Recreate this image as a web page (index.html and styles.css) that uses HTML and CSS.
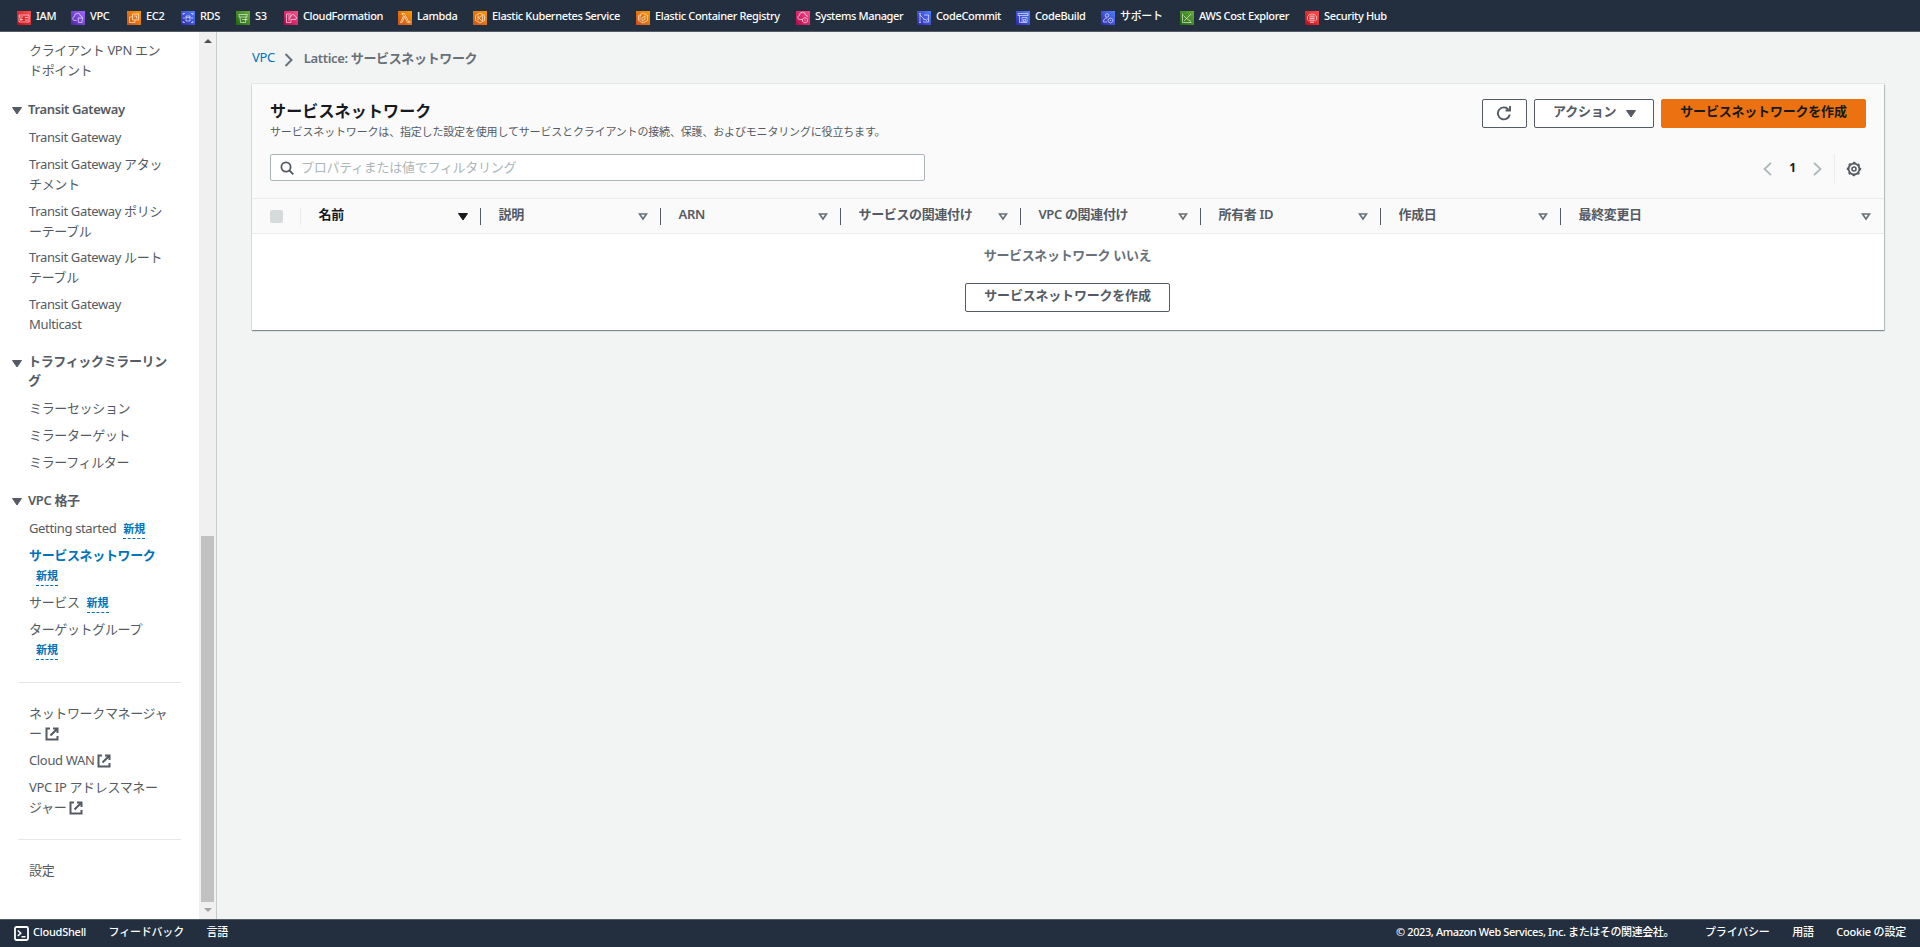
FILE: index.html
```html
<!DOCTYPE html>
<html lang="ja">
  <head>
    <meta charset="UTF-8" />
    <meta name="viewport" content="width=device-width, initial-scale=1.0" />
    <title>サービスネットワーク | VPC</title>
    <link rel="stylesheet" href="styles.css">
  </head>
  <body>
    <svg class="defs" width="0" height="0">
      <defs>
        <symbol id="external" viewBox="0 0 14 14">
          <path d="M5 1.500H1.500v11h11V9M8 1.500h4.500V6M12.500 1.500L5.500 8.500" fill="none" stroke="#545b64" stroke-width="2" />
        </symbol>
        <symbol id="sort" viewBox="0 0 10 8">
          <path d="M1.500 1h7L5 6z" fill="none" stroke="#687078" stroke-width="1.700" />
        </symbol>
        <symbol id="caret" viewBox="0 0 10 8">
          <path d="M.5.500h9L5 7z" fill="currentColor" stroke="currentColor" stroke-linejoin="round" />
        </symbol>
      </defs>
    </svg>
    <header class="favorites">
      <a class="fav"><svg class="icon red" viewBox="0 0 14 14"><path d="M2 4h10v7H2zM2 6h4M8 6.500h3M8 9h3M4 7v3M3 8.500h3" /></svg>IAM</a>
      <a class="fav"><svg class="icon purple" viewBox="0 0 14 14"><path d="M5.500 9.500H4a2 2 0 0 1-.5-4 3 3 0 0 1 6-.5 2 2 0 0 1 2 2M7 7h4.500l-.5 4.500H7.500z" /></svg>VPC</a>
      <a class="fav"><svg class="icon orange" viewBox="0 0 14 14"><path d="M5.500 3h6v6h-6zM8 9v2.500H2.500V6h3M7 5h2.500v2.500" /></svg>EC2</a>
      <a class="fav"><svg class="icon blue" viewBox="0 0 14 14"><path d="M2 4V2.500h2M10 2.500h2V4M2 10v1.500h2M10 11.500h2V10M5 5h4v5H5zM5 6.500h4M2.500 6l1 1-1 1M11.500 6l-1 1 1 1" /></svg>RDS</a>
      <a class="fav"><svg class="icon green" viewBox="0 0 14 14"><path d="M2.500 3.500h9M3 4v2h8V4M4 6l.5 5.500h5L10 6M6 8.500h5.500" /></svg>S3</a>
      <a class="fav"><svg class="icon pink" viewBox="0 0 14 14"><path d="M7 3H2.500v8.500H7V9M4 5h3M4 7h2M4 9h2M8 8.500h3a1.500 1.500 0 0 0 0-3 2 2 0 0 0-4 0 1.500 1.500 0 0 0 1 3z" /></svg>CloudFormation</a>
      <a class="fav"><svg class="icon orange" viewBox="0 0 14 14"><path d="M4 2.500h2.500l4 8H12v1H9.500L6.500 5.500 4 11.500H2.500L5.700 4.500 5 3.500H4z" /></svg>Lambda</a>
      <a class="fav"><svg class="icon orange" viewBox="0 0 14 14"><path d="M7 2l4.500 2.500v5L7 12 2.500 9.500v-5zM5 4.500v5M5 7l4-2.500M6 7l3 3M9.500 4v6" /></svg>Elastic Kubernetes Service</a>
      <a class="fav"><svg class="icon orange" viewBox="0 0 14 14"><path d="M7 2l4.500 2.500v5L7 12 2.500 9.500v-5zM6 10V7l3-2v3.500zM5 4l-1 1v4" /></svg>Elastic Container Registry</a>
      <a class="fav"><svg class="icon pink" viewBox="0 0 14 14"><path d="M6 8.500H4a2 2 0 0 1-.5-4 3 3 0 0 1 6-.5 2 2 0 0 1 2 2M9 6.500l2.500 1.500v2.500L9 12l-2.500-1.500V8zM9 8.500v1.500" /></svg>Systems Manager</a>
      <a class="fav"><svg class="icon blue" viewBox="0 0 14 14"><path d="M3 3v8M3 4l4 4M7 4h4.500v7H6M2 2.500h2M2 11.500h2M6 9l2-1 1.500 1.500 1-2" /></svg>CodeCommit</a>
      <a class="fav"><svg class="icon blue" viewBox="0 0 14 14"><path d="M2 2.500h10v2H2zM3.500 4.500v7H11v-5H6v5M7.500 8.500h2v2h-2z" /></svg>CodeBuild</a>
      <a class="fav"><svg class="icon blue" viewBox="0 0 14 14"><circle cx="6" cy="4.500" r="1.800" /><path d="M6 11H2.500c0-3 1.500-4 3.500-4M9.500 7l2.500 1.500v2L9.500 12 7 10.500v-2zM9.500 9v1" /></svg>サポート</a>
      <a class="fav"><svg class="icon green" viewBox="0 0 14 14"><path d="M2.500 2.500v9h9M3.500 4.500l3 3 4.500-4.500M6.500 7.500l4.500 3M4 10l2.500-2.500" /></svg>AWS Cost Explorer</a>
      <a class="fav"><svg class="icon red" viewBox="0 0 14 14"><path d="M4 10.500C1 8 2 3 7 3s6 5 3 7.500M5 5h4v5H5zM5 7.500h4M7 5v5M5 11.500h4" /></svg>Security Hub</a>
    </header>

    <div class="content">
      <nav class="sidebar">
        <div class="menu">
          <ul class="first">
            <li>クライアント VPN エン<br>ドポイント</li>
          </ul>
          <h3 class="transit"><svg class="toggle"><use href="#caret" /></svg>Transit Gateway</h3>
          <ul class="gateways">
            <li>Transit Gateway</li>
            <li>Transit Gateway アタッ<br>チメント</li>
            <li>Transit Gateway ポリシ<br>ーテーブル</li>
            <li>Transit Gateway ルート<br>テーブル</li>
            <li>Transit Gateway<br>Multicast</li>
          </ul>
          <h3 class="mirror"><svg class="toggle"><use href="#caret" /></svg>トラフィックミラーリン<br>グ</h3>
          <ul class="mirrors">
            <li>ミラーセッション</li>
            <li>ミラーターゲット</li>
            <li>ミラーフィルター</li>
          </ul>
          <h3><svg class="toggle"><use href="#caret" /></svg>VPC 格子</h3>
          <ul class="lattice">
            <li>Getting started<span class="new">新規</span></li>
            <li class="active">サービスネットワーク<br><span class="new">新規</span></li>
            <li>サービス<span class="new">新規</span></li>
            <li>ターゲットグループ<br><span class="new">新規</span></li>
          </ul>
          <hr>
          <ul>
            <li>ネットワークマネージャ<br>ー<svg class="external"><use href="#external" /></svg></li>
            <li>Cloud WAN<svg class="external"><use href="#external" /></svg></li>
            <li>VPC IP アドレスマネー<br>ジャー<svg class="external"><use href="#external" /></svg></li>
          </ul>
          <hr>
          <ul>
            <li>設定</li>
          </ul>
        </div>
        <div class="scrollbar">
          <svg class="arrow" viewBox="0 0 8 4"><path d="M0 4l4-4 4 4z" fill="#505050" /></svg>
          <div class="thumb"></div>
          <svg class="arrow" viewBox="0 0 8 4"><path d="M0 0l4 4 4-4z" fill="#a3a3a3" /></svg>
        </div>
      </nav>

      <main>
        <div class="breadcrumb">
          <a>VPC</a>
          <svg width="10" height="14" viewBox="0 0 10 14"><path d="M1.500 1l6 6-6 6" fill="none" stroke="#687078" stroke-width="2" /></svg>
          <span>Lattice: サービスネットワーク</span>
        </div>
        <section class="card">
          <div class="cardhead">
            <div class="titlerow">
              <div>
                <h1>サービスネットワーク</h1>
                <p>サービスネットワークは、指定した設定を使用してサービスとクライアントの接続、保護、およびモニタリングに役立ちます。</p>
              </div>
              <div class="actions">
                <button class="btn refresh">
                  <svg width="16" height="16" viewBox="0 0 16 16"><path d="M13.800 9.500A6 6 0 1 1 12.500 4.500M14 1v4.500H9.500" fill="none" stroke="#545b64" stroke-width="1.900" /></svg>
                </button>
                <button class="btn dropdown"><span>アクション</span><svg class="toggle"><use href="#caret" /></svg></button>
                <button class="btn primary"><span>サービスネットワークを作成</span></button>
              </div>
            </div>
            <div class="filterrow">
              <div class="search">
                <svg width="14" height="14" viewBox="0 0 14 14" fill="none" stroke="#545b64" stroke-width="1.800"><circle cx="6" cy="6" r="4.600" /><path d="M9.500 9.500l3.800 3.800" /></svg>
                <span>プロパティまたは値でフィルタリング</span>
              </div>
              <div class="pager">
                <svg width="9" height="14" viewBox="0 0 9 14"><path d="M8 .8L1.500 7 8 13.200" fill="none" stroke="#aab7b8" stroke-width="1.800" /></svg>
                <b>1</b>
                <svg width="9" height="14" viewBox="0 0 9 14"><path d="M1 .8L7.500 7 1 13.200" fill="none" stroke="#aab7b8" stroke-width="1.800" /></svg>
                <span class="gear">
                  <svg width="16" height="16" viewBox="0 0 16 16" fill="none" stroke="#545b64"><circle cx="8" cy="8" r="5.400" stroke-width="1.800" /><circle cx="8" cy="8" r="6.600" stroke-width="1.200" stroke-dasharray="2.700 2.480" stroke-dashoffset="1.300" /><circle cx="8" cy="8" r="2" stroke-width="1.600" /></svg>
                </span>
              </div>
            </div>
          </div>
          <div class="thead">
            <div class="check"><i></i></div>
            <div class="th sorted"><span>名前</span><svg class="sort"><use href="#caret" /></svg></div>
            <div class="th"><span>説明</span><svg class="sort"><use href="#sort" /></svg></div>
            <div class="th"><span>ARN</span><svg class="sort"><use href="#sort" /></svg></div>
            <div class="th"><span>サービスの関連付け</span><svg class="sort"><use href="#sort" /></svg></div>
            <div class="th"><span>VPC の関連付け</span><svg class="sort"><use href="#sort" /></svg></div>
            <div class="th"><span>所有者 ID</span><svg class="sort"><use href="#sort" /></svg></div>
            <div class="th"><span>作成日</span><svg class="sort"><use href="#sort" /></svg></div>
            <div class="th"><span>最終変更日</span><svg class="sort"><use href="#sort" /></svg></div>
          </div>
          <div class="empty">
            <b>サービスネットワーク いいえ</b>
            <button class="btn"><span>サービスネットワークを作成</span></button>
          </div>
        </section>
      </main>
    </div>

    <footer>
      <svg class="shell" viewBox="0 0 15 15" fill="none" stroke="#fff"><rect x="1" y="1" width="13" height="13" rx="1.500" stroke-width="1.800" /><path d="M3.800 4.500l3 2.700-3 2.700M7.500 10.800h4" stroke-width="1.500" /></svg>
      <a class="cloudshell">CloudShell</a>
      <a>フィードバック</a>
      <a>言語</a>
      <span class="copyright">© 2023, Amazon Web Services, Inc. またはその関連会社。</span>
      <a class="privacy">プライバシー</a>
      <a>用語</a>
      <a>Cookie の設定</a>
    </footer>
  </body>
</html>
```
FILE: styles.css
```css
* {
  box-sizing: border-box;
}

body {
  margin: 0;
  height: 947px;
  display: flex;
  flex-direction: column;
  overflow: hidden;
  font-family: "Noto Sans", "Noto Sans CJK JP", sans-serif;
  font-size: 13px;
  letter-spacing: -0.35px;
  color: #545b64;
  background: #f2f3f3;
}

.defs {
  position: absolute;
}

h1,
h3,
p,
ul {
  margin: 0;
  padding: 0;
}

.favorites {
  height: 32px;
  flex: none;
  display: grid;
  grid-template-columns: 54px 56px 54px 55px 48px 114px 75px 163px 160px 121px 99px 85px 79px 125px 100px;
  padding: 0 0 0 17px;
  background: #232f3e;
  border-bottom: 1px solid #545b64;
}

.fav {
  display: flex;
  gap: 5px;
  color: #fff;
  font-size: 11px;
  font-weight: 500;
  line-height: 32px;
  letter-spacing: -0.36px;
  white-space: nowrap;
}

.icon {
  width: 14px;
  height: 14px;
  flex: none;
  margin-top: 11px;
  fill: none;
  stroke: #fff;
  stroke-opacity: 0.75;
  stroke-width: 0.8;
}

.red {
  background: linear-gradient(45deg, #bd0816, #ff5252);
}

.purple {
  background: linear-gradient(45deg, #4d27a8, #a166ff);
}

.orange {
  background: linear-gradient(45deg, #c8511b, #ff9900);
}

.blue {
  background: linear-gradient(45deg, #2e27ad, #527fff);
}

.green {
  background: linear-gradient(45deg, #1b660f, #6cae3e);
}

.pink {
  background: linear-gradient(45deg, #b0084d, #ff4f8b);
}

.content {
  flex: 1;
  display: flex;
  min-height: 0;
}

/* left menu */
.sidebar {
  width: 217px;
  flex: none;
  display: flex;
  background: #fff;
  border-right: 1px solid #c5cccc;
}

.menu {
  width: 199px;
  line-height: 20px;
  white-space: nowrap;
}

.menu ul {
  list-style: none;
  padding-left: 29px;
}

.menu li {
  margin-bottom: 7px;
}

.menu .first {
  padding-top: 8px;
}

.menu h3 {
  position: relative;
  margin: 18px 0 7px;
  padding-left: 28px;
  font-size: 13px;
  font-weight: 600;
}

.menu h3.transit {
  margin: 19px 0 8px;
}

.menu .gateways li {
  margin-bottom: 6.75px;
}

.menu h3.mirror {
  margin-top: 18.25px;
  line-height: 19px;
}

.mirrors {
  padding-top: 1px;
}

.toggle {
  width: 10px;
  height: 8px;
}

.menu .toggle {
  position: absolute;
  left: 11.5px;
  top: 8px;
}

.lattice {
  padding-top: 1px;
}

.menu .lattice li {
  margin-bottom: 6px;
}

.active {
  color: #0073bb;
  font-weight: 700;
}

.new {
  display: inline-block;
  margin-left: 7px;
  font-size: 11px;
  font-weight: 700;
  line-height: 18px;
  letter-spacing: 0;
  color: #0073bb;
  border-bottom: 1px dashed #0073bb;
}

hr {
  width: 163px;
  margin: 22px 18px 20px;
  border: 0;
  border-top: 1px solid #e3e7e7;
}

.external {
  width: 14px;
  height: 14px;
  margin-left: 3px;
  vertical-align: -3px;
}

.scrollbar {
  width: 17px;
  display: flex;
  flex-direction: column;
  align-items: center;
  background: #f0f0f0;
}

.arrow {
  width: 8px;
  height: 4px;
  margin: 7px 0;
}

.thumb {
  width: 13px;
  height: 366px;
  margin-top: auto;
  margin-bottom: -1px;
  background: #c1c1c1;
}

main {
  flex: 1;
  padding: 15px 36px 0 35px;
}

.breadcrumb {
  display: flex;
  align-items: center;
  height: 20px;
  gap: 9px;
}

.breadcrumb a {
  color: #0073bb;
}

.breadcrumb svg {
  margin-top: 5px;
}

.breadcrumb span {
  margin-left: 1px;
  font-weight: 600;
  color: #687078;
}

.card {
  width: 1632px;
  height: 246px;
  margin-top: 17px;
  background: #fff;
  box-shadow: 0 1px 1px 0 rgba(0, 28, 36, 0.35), 1px 1px 1px 0 rgba(0, 28, 36, 0.15), 0 0 0 1px #e3e7e7;
}

.cardhead {
  height: 115px;
  padding: 15px 18px 0;
  background: #fafafa;
  border-bottom: 1px solid #eaeded;
}

.titlerow {
  display: flex;
  justify-content: space-between;
  height: 55px;
}

h1 {
  font-size: 16px;
  line-height: 25px;
  letter-spacing: 0.15px;
  color: #16191f;
}

.titlerow p {
  font-size: 11px;
  line-height: 15px;
  letter-spacing: -0.17px;
}

.actions {
  display: flex;
  gap: 7px;
}

.btn {
  height: 29px;
  padding: 0 18px;
  font: inherit;
  font-weight: 600;
  line-height: 22px;
  letter-spacing: -0.2px;
  color: #545b64;
  background: #fff;
  border: 1px solid #545b64;
  border-radius: 2px;
  white-space: nowrap;
}

.btn span {
  display: block;
  height: 27px;
}

.refresh {
  width: 45px;
  padding: 5px 1px 0 0;
}

.dropdown {
  display: flex;
  width: 120px;
  gap: 10px;
}

.dropdown .toggle {
  flex: none;
  margin-top: 10px;
}

.primary {
  width: 205px;
  background: #ec7211;
  border-color: #ec7211;
  color: #16191f;
}

.filterrow {
  display: flex;
  justify-content: space-between;
}

.search {
  display: flex;
  align-items: center;
  gap: 7px;
  width: 655px;
  height: 27px;
  padding-left: 9px;
  background: #fff;
  border: 1px solid #aab7b8;
  border-radius: 2px;
  color: #aab7b8;
  letter-spacing: -0.28px;
}

.search span {
  margin-top: -3px;
}

.search svg {
  margin-top: 1px;
}

.pager {
  display: flex;
  align-items: center;
  height: 29px;
}

.pager b {
  width: 41px;
  margin-top: -2px;
  text-align: center;
  color: #16191f;
  font-size: 12px;
}

.gear {
  display: flex;
  align-items: center;
  height: 29px;
  margin-left: 12px;
  padding: 0 4px 0 11px;
  border-left: 1px solid #eaeded;
}

.thead {
  display: grid;
  grid-template-columns: 49px repeat(7, 180px) 1fr;
  align-items: center;
  height: 35px;
  background: #fafafa;
  border-bottom: 1px solid #eaeded;
}

.check {
  height: 17px;
  padding: 2px 0 0 18px;
  border-right: 1px solid #eaeded;
}

.check i {
  display: block;
  width: 13px;
  height: 13px;
  background: #d5dbdb;
  border-radius: 2px;
}

.th {
  display: flex;
  align-items: center;
  justify-content: space-between;
  height: 17px;
  padding: 0 12.5px 0 17.5px;
  font-weight: 600;
  line-height: 15px;
  border-right: 1px solid #545b64;
}

.th span {
  margin-top: -4px;
}

.th:last-child {
  padding-right: 13px;
  border: 0;
}

.sorted {
  color: #16191f;
}

.sort {
  width: 10px;
  height: 8px;
  margin-top: 1px;
}

.empty {
  display: flex;
  flex-direction: column;
  align-items: center;
  padding: 11px 1px 0 0;
  gap: 18px;
}

.empty b {
  font-weight: 600;
  line-height: 20px;
  color: #687078;
}

.empty .btn {
  width: 205px;
}

footer {
  display: flex;
  height: 28px;
  flex: none;
  padding: 0 14px;
  background: #232f3e;
  border-top: 1px solid #545b64;
  color: #fff;
  font-size: 11px;
  font-weight: 500;
  line-height: 24px;
  letter-spacing: -0.2px;
  white-space: nowrap;
}

footer a {
  margin-right: 22.5px;
}

footer a:last-child {
  margin-right: 0;
}

.shell {
  width: 15px;
  height: 15px;
  margin: 6px 4px 0 0;
}

.cloudshell {
  letter-spacing: -0.25px;
}

.copyright {
  margin-left: auto;
  letter-spacing: -0.4px;
}

.privacy {
  margin-left: 31px;
}
```
